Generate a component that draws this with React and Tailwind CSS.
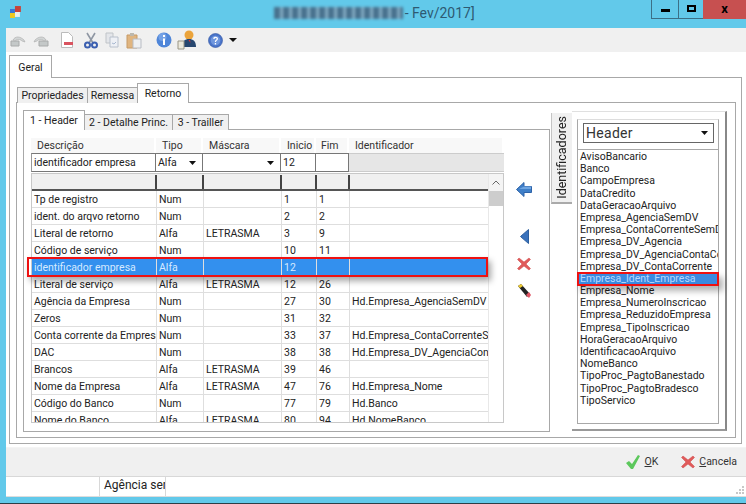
const rows = [
  ["Tp de registro", "Num", "", "1", "1", ""],
  ["ident. do arqvo retorno", "Num", "", "2", "2", ""],
  ["Literal de retorno", "Alfa", "LETRASMA", "3", "9", ""],
  ["Código de serviço", "Num", "", "10", "11", ""],
  ["identificador empresa", "Alfa", "", "12", "", ""],
  ["Literal de serviço", "Alfa", "LETRASMA", "12", "26", ""],
  ["Agência da Empresa", "Num", "", "27", "30", "Hd.Empresa_AgenciaSemDV"],
  ["Zeros", "Num", "", "31", "32", ""],
  ["Conta corrente da Empresa", "Num", "", "33", "37", "Hd.Empresa_ContaCorrenteSemDV"],
  ["DAC", "Num", "", "38", "38", "Hd.Empresa_DV_AgenciaConta"],
  ["Brancos", "Alfa", "LETRASMA", "39", "46", ""],
  ["Nome da Empresa", "Alfa", "LETRASMA", "47", "76", "Hd.Empresa_Nome"],
  ["Código do Banco", "Num", "", "77", "79", "Hd.Banco"],
  ["Nome do Banco", "Alfa", "LETRASMA", "80", "94", "Hd.NomeBanco"],
];
const items = ["AvisoBancario","Banco","CampoEmpresa","DataCredito","DataGeracaoArquivo","Empresa_AgenciaSemDV","Empresa_ContaCorrenteSemDV","Empresa_DV_Agencia","Empresa_DV_AgenciaContaCorrente","Empresa_DV_ContaCorrente","Empresa_Ident_Empresa","Empresa_Nome","Empresa_NumeroInscricao","Empresa_ReduzidoEmpresa","Empresa_TipoInscricao","HoraGeracaoArquivo","IdentificacaoArquivo","NomeBanco","TipoProc_PagtoBanestado","TipoProc_PagtoBradesco","TipoServico"];

const Caret = () => (
  <svg width="7" height="4" viewBox="0 0 7 4" className="shrink-0"><path d="M0 0h7L3.5 4z" fill="#111" /></svg>
);

function Toolbar() {
  return (
    <div className="h-[24px] bg-[#f0f0f0] flex items-center pl-[4px] shrink-0">
      <svg width="16" height="14" viewBox="0 0 16 14" className="mt-[1px]"><path d="M1 7h8v5H1z" fill="#c4c8c8" stroke="#a8aaaa"/><path d="M3 6c2-4 7-4 11 0l1 2-3-1c-2-2-5-2-7 0z" fill="#d2d5d5" stroke="#aaa" strokeWidth=".6"/></svg>
      <svg width="16" height="14" viewBox="0 0 16 14" className="ml-[7px] mt-[1px]"><path d="M6 7h9v5H6z" fill="#c4c8c8" stroke="#a8aaaa"/><path d="M13 6C11 2 6 2 2 6L1 8l3-1c2-2 5-2 7 0z" fill="#d2d5d5" stroke="#aaa" strokeWidth=".6"/></svg>
      <svg width="14" height="16" viewBox="0 0 14 16" className="ml-[11px]"><path d="M1.500.5h7l4 4v11h-11z" fill="#fff" stroke="#bbb"/><path d="M4 10h9v3H4z" fill="#d9535f"/></svg>
      <svg width="14" height="17" viewBox="0 0 14 17" className="ml-[10px]"><path d="M3 1l6 10M11 1L5 11" stroke="#8f97a3" strokeWidth="1.600"/><circle cx="3.500" cy="13" r="2.500" fill="none" stroke="#3b5fb0" strokeWidth="2"/><circle cx="10.500" cy="13" r="2.500" fill="none" stroke="#3b5fb0" strokeWidth="2"/></svg>
      <svg width="14" height="16" viewBox="0 0 14 16" className="ml-[7px]"><path d="M1 1h7v10H1z" fill="#e4e6ea" stroke="#c0c4c8"/><path d="M5 5h8v10H5z" fill="#eef0f5" stroke="#b8c0cc"/><path d="M7 11l2 1 2-2" stroke="#a8b8d0" fill="none"/></svg>
      <svg width="16" height="17" viewBox="0 0 16 17" className="ml-[7px]"><path d="M1 3h10v13H1z" fill="#e0b580" stroke="#c69a66"/><path d="M4 1h4v3H4z" fill="#bcb8ae"/><path d="M7 7h8v9H7z" fill="#eef0f2" stroke="#b8bcc4"/></svg>
      <svg width="16" height="16" viewBox="0 0 16 16" className="ml-[14px]"><circle cx="8" cy="8" r="7.500" fill="#4f86d9"/><circle cx="6.500" cy="5" r="4" fill="#8db4ec" opacity=".6"/><path d="M7 3h2v2H7zM7 6.500h2V13H7z" fill="#fff"/></svg>
      <svg width="20" height="20" viewBox="0 0 20 20" className="ml-[5px]"><circle cx="12" cy="5" r="4.500" fill="#eba43c"/><path d="M5 17c0-6 3-8 7-8s7 2 7 8z" fill="#27476f"/><path d="M11.500 10h1.500l.5 3z" fill="#d33"/><path d="M1 11h6v8H1z" fill="#ece9dc" stroke="#9a9686"/></svg>
      <svg width="15" height="15" viewBox="0 0 15 15" className="ml-[11px]"><circle cx="7.500" cy="7.500" r="7" fill="#4a74c9" stroke="#2f52a0" strokeWidth=".6"/><circle cx="7.500" cy="7.500" r="4.800" fill="#6f96dd"/><path d="M5 5.500C5.500 3 10 3 10 5.700c0 1.800-2 1.600-2 3.300H6.800c0-2.200 1.900-2 1.900-3.300 0-1-1.900-1-2.300.3zM6.800 10h1.300v1.500H6.800z" fill="#fff"/></svg>
      <span className="ml-[6px] mt-[-1px]"><svg width="8" height="4" viewBox="0 0 8 4"><path d="M0 0h8L4 4z" fill="#111"/></svg></span>
    </div>
  );
}

const TabBtn = ({ active, w, children }) => (
  <div
    className={`flex items-center justify-center border-l border-r border-t border-[#a8a8a8] -ml-px first:ml-0 whitespace-nowrap ${active ? "bg-white relative z-10 h-[20px]" : "bg-[#f0f0f0] h-[16px]"}`}
    style={{ width: w }}
  >{children}</div>
);

function GridArea() {
  return (
    <div className="w-[473px] shrink-0">
      <div className="grid grid-cols-[125px_47px_78px_35px_33px_155px] h-[15px] bg-[#f8f8f8] text-[#333]">
        {["Descrição","Tipo","Máscara","Inicio","Fim","Identificador"].map((h, i) => (
          <div key={h} className={`border-r-2 border-white leading-[15px] ${i === 4 ? "pl-[5px]" : "pl-[6px]"}`}>{h}</div>
        ))}
      </div>
      <div className="grid grid-cols-[125px_47px_78px_35px_33px_155px] h-[19px] border-b border-[#e0e0e0]">
        <div className="border border-[#777] border-l-[#999] pl-[2px] leading-[17px]">identificador empresa</div>
        <div className="border-y border-r border-[#777] pl-[2px] flex items-center justify-between pr-[6px]">Alfa<Caret /></div>
        <div className="border-y border-r border-[#777] flex items-center justify-end pr-[6px]"><Caret /></div>
        <div className="border-y border-r border-[#777] pl-[2px] leading-[17px]">12</div>
        <div className="border-y border-r border-[#777]"></div>
        <div className="bg-[#e6e6e6] border-y border-[#ccc]"></div>
      </div>
      <div className="relative mt-[1px] h-[250px] border border-[#c8c8c8] flex">
        <div className="w-[456px] shrink-0 overflow-hidden">
          <div className="grid grid-cols-[125px_47px_78px_35px_33px_138px] h-[17px] bg-[#f0f0f0] border-t border-b-2 border-[#f0f0f0] border-b-[#555]">
            {[0,1,2,3,4,5].map((i) => <div key={i} className={i < 5 ? "border-r-2 border-[#444]" : ""}></div>)}
          </div>
          {rows.map((r) => {
            const sel = r[0] === "identificador empresa";
            return (
              <div key={r[0]} className={`grid grid-cols-[125px_47px_78px_35px_33px_138px] h-[17px] border-b border-[#dedede] leading-[18px] ${sel ? "bg-[#3390ee] text-[#d6eaff]" : "text-[#222]"}`}>
                {r.map((c, i) => (
                  <div key={i} className={`overflow-hidden whitespace-nowrap pl-[2px] ${i < 5 ? "border-r border-[#dedede]" : ""} ${sel ? "border-[#6fb0f2]" : ""}`}>{c}</div>
                ))}
              </div>
            );
          })}
        </div>
        <div className="flex-1 border-l border-[#e8e8e8] bg-white">
          <div className="h-[17px] flex items-center justify-center bg-[#f4f4f4]">
            <svg width="8" height="5" viewBox="0 0 8 5"><path d="M.5 4.500L4 1l3.500 3.500" fill="none" stroke="#666"/></svg>
          </div>
          <div className="h-[15px] bg-[#cdcdcd]"></div>
        </div>
        <div className="absolute left-[-5px] top-[83px] w-[461px] h-[20px] border-2 border-[#ee1111] shadow-[3px_4px_6px_rgba(0,0,0,0.35)] pointer-events-none"></div>
      </div>
    </div>
  );
}

function Actions() {
  return (
    <div className="flex-1 flex flex-col items-center pr-[6px]">
      <svg width="16" height="15" viewBox="0 0 16 15" className="mt-[44px]"><path d="M8 .5v4h7.500v6H8v4L.5 7.500z" fill="#3f7fc8" stroke="#2e63a8"/><path d="M8 4.500h7v2.500H3z" fill="#6ea5e2"/></svg>
      <svg width="9" height="15" viewBox="0 0 9 15" className="mt-[32px] ml-[1px]"><path d="M8.500.5v14L.5 7.500z" fill="#3a72bc" stroke="#2d5f9f"/></svg>
      <svg width="14" height="14" viewBox="0 0 14 14" className="mt-[13px]"><path d="M2 1l5 4 5-4 1.500 1.500L9 7l4.500 4.500L12 13 7 9l-5 4-1.500-1.500L5 7 .5 2.500z" fill="#e05a5a" stroke="#cc4646" strokeWidth=".5"/></svg>
      <svg width="14" height="16" viewBox="0 0 14 16" className="mt-[12px]"><path d="M1 3l3-2 9 10-3 3z" fill="#222"/><path d="M1 3l3-2 2 2-3 2z" fill="#f0cc30"/><path d="M9 12l3-3 2 3-2 3z" fill="#e05565"/></svg>
    </div>
  );
}

function SidePanel() {
  return (
    <div className="flex-1 flex pt-[8px] h-full">
      <div className="w-[21px] h-[91px] mt-[2px] ml-[1px] bg-[#f0f0f0] border-l border-b-2 border-[#c4c4c4] border-b-[#aaa] flex items-center justify-center shrink-0">
        <span className="[writing-mode:vertical-rl] rotate-180 text-[12.500px] text-[#222] leading-none">Identificadores</span>
      </div>
      <div className="w-[155px] h-[320px] border-t border-[#e0e0e0] border-r-2 border-r-[#888] border-b-2 border-b-[#999] pt-[7px] pl-[5px] shrink-0">
        <div className="w-[142px] h-[305px] border border-[#a8a8a8] border-t-[#ddd]">
          <div className="pl-[5px] pt-[3px] h-[29px]">
            <div className="w-[131px] h-[20px] border border-[#666] flex items-center justify-between pl-[2px] pr-[5px] text-[14px] tracking-[0.3px] text-[#333]">Header<Caret /></div>
          </div>
          <div className="relative border-t border-[#a8a8a8] h-[274px] overflow-visible">
            <div className="overflow-hidden">
              {items.map((t) => (
                <div key={t} className={`h-[12.2px] leading-[13px] pl-[2px] whitespace-nowrap overflow-hidden ${t === "Empresa_Ident_Empresa" ? "bg-[#3a8ae0] text-[#b6d8ff]" : "text-[#222]"}`}>{t}</div>
              ))}
            </div>
            <div className="absolute -left-px top-[122px] w-[142px] h-[14px] border-2 border-[#ee1111] shadow-[4px_5px_6px_rgba(0,0,0,0.3)] pointer-events-none"></div>
          </div>
        </div>
      </div>
    </div>
  );
}

export default function App() {
  return (
    <div className="w-[746px] h-[504px] bg-[#62c9ea] flex flex-col overflow-hidden text-[10.500px] text-[#222] font-['Roboto',sans-serif]">
      <div className="h-[28px] flex shrink-0">
        <svg width="12" height="12" viewBox="0 0 12 12" className="ml-[10px] mt-[6px]"><path d="M0 3h5v4H0z" fill="#3a78d8"/><path d="M5 0h6v6H5z" fill="#c8423a"/><path d="M0 7h5v5H0z" fill="#f0c820"/><path d="M5 6h5v5H5z" fill="#e8eef0"/></svg>
        <div className="ml-[252px] mt-[7px] w-[130px] h-[12px] bg-[repeating-linear-gradient(90deg,#47708c_0,#47708c_5px,#7aa3bb_7px,#9fc6dc_9px)] blur-[1.5px]"></div>
        <span className="mt-[5px] ml-[2px] text-[#2e5a72] text-[14px] leading-[16px] w-[72px] whitespace-nowrap">- Fev/2017]</span>
        <div className="ml-[175px] flex h-[19px]">
          <div className="w-[27px] bg-[#62c9ea] border-l border-b border-[#3c6f86] flex items-center justify-center"><div className="w-[9px] h-[3px] bg-black mt-[3px]"></div></div>
          <div className="w-[25px] bg-[#62c9ea] border-l border-b border-[#3c6f86] flex items-center justify-center"><div className="w-[9px] h-[7px] border-2 border-black -mt-[2px]"></div></div>
          <div className="w-[43px] bg-[#c75050] flex items-center justify-center text-[13px] font-bold text-black leading-none pb-[2px]">x</div>
        </div>
      </div>
      <div className="flex-1 ml-[6px] flex flex-col bg-white border-b border-[#ddd]">
        <Toolbar />
        <div className="h-[395px] pl-[3px] pr-[4px] pt-[3px] flex flex-col bg-white">
          <div className="w-[43px] h-[23px] border-l border-r border-t border-[#a8a8a8] bg-white relative z-10 -mb-px flex items-center justify-center pt-[1px] shrink-0">Geral</div>
          <div className="h-[367px] border border-[#a8a8a8] bg-white pl-[6px] pr-[5px] pt-[5px]">
            <div className="flex items-end h-[20px] pl-[1px]">
              <TabBtn w="71px">Propriedades</TabBtn>
              <TabBtn w="51px">Remessa</TabBtn>
              <TabBtn w="52px" active>Retorno</TabBtn>
            </div>
            <div className="h-[336px] border border-[#a8a8a8] -mt-px pl-[6px] pr-[7px] flex bg-white">
              <div className="w-[527px] shrink-0 pt-[7px]">
                <div className="flex items-end h-[20px]">
                  <TabBtn w="62px" active>1 - Header</TabBtn>
                  <TabBtn w="89px">2 - Detalhe Princ.</TabBtn>
                  <TabBtn w="57px">3 - Trailler</TabBtn>
                </div>
                <div className="h-[303px] -mt-px border border-[#a8a8a8] pl-[7px] pt-[8px] flex">
                  <GridArea />
                  <Actions />
                </div>
              </div>
              <SidePanel />
            </div>
          </div>
        </div>
        <div className="h-[29px] bg-[#f0f0f0] flex items-center justify-end shrink-0 border-t border-[#f4f4f4]">
          <svg width="16" height="16" viewBox="0 0 16 16"><path d="M1 9l3-2 3 3 6-9 2 1-7 13H6z" fill="#5cc85c"/></svg>
          <span className="ml-[3px] text-[#333]"><span className="underline">O</span>K</span>
          <svg width="14" height="14" viewBox="0 0 14 14" className="ml-[23px]"><path d="M2 1l5 4 5-4 1.500 1.500L9 7l4.500 4.500L12 13 7 9l-5 4-1.500-1.500L5 7 .5 2.500z" fill="#e05a5a" stroke="#cc4646" strokeWidth=".5"/></svg>
          <span className="ml-[4px] mr-[9px] text-[#333]"><span className="underline">C</span>ancela</span>
        </div>
        <div className="h-[20px] bg-white border-t border-[#d8d8d8] flex items-stretch relative shrink-0">
          <div className="w-[94px] border-r border-[#d8d8d8]"></div>
          <div className="w-[66px] border-r border-[#d8d8d8] pl-[4px] overflow-hidden whitespace-nowrap leading-[17px] text-[12px]">Agência sem DV</div>
          <svg width="10" height="10" viewBox="0 0 10 10" className="absolute right-[1px] bottom-[1px]"><path d="M7 1h2v2H7zM4 4h2v2H4zM7 4h2v2H7zM1 7h2v2H1zM4 7h2v2H4zM7 7h2v2H7z" fill="#c8c8c8"/></svg>
        </div>
      </div>
      <div className="h-[8px] shrink-0 border-b-2 border-[#2c3e46]"></div>
    </div>
  );
}
